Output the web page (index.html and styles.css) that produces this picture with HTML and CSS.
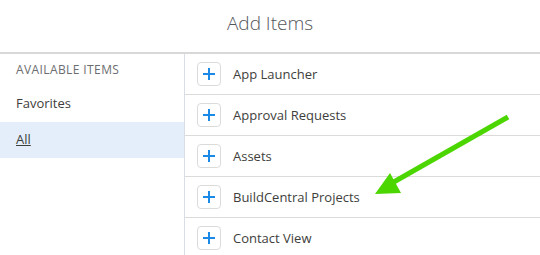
FILE: index.html
```html
<!DOCTYPE html>
<html lang="en">
<head>
    <meta charset="UTF-8">
    <title>Add Items</title>
    <link rel="stylesheet" href="styles.css">
</head>
<body>
    <div class="modal">
        <h1 class="title">Add Items</h1>
        <div class="content">
            <div class="sidebar">
                <div class="section-label">AVAILABLE ITEMS</div>
                <div class="nav-item">Favorites</div>
                <div class="nav-item active"><span>All</span></div>
            </div>
            <ul class="items">
                <li class="item"><span class="add-btn"><svg width="12" height="12" viewBox="0 0 12 12"><path d="M6 0v12M0 6h12" stroke="#1b8ae6" stroke-width="2"/></svg></span>App Launcher</li>
                <li class="item"><span class="add-btn"><svg width="12" height="12" viewBox="0 0 12 12"><path d="M6 0v12M0 6h12" stroke="#1b8ae6" stroke-width="2"/></svg></span>Approval Requests</li>
                <li class="item"><span class="add-btn"><svg width="12" height="12" viewBox="0 0 12 12"><path d="M6 0v12M0 6h12" stroke="#1b8ae6" stroke-width="2"/></svg></span>Assets</li>
                <li class="item"><span class="add-btn"><svg width="12" height="12" viewBox="0 0 12 12"><path d="M6 0v12M0 6h12" stroke="#1b8ae6" stroke-width="2"/></svg></span>BuildCentral Projects</li>
                <li class="item"><span class="add-btn"><svg width="12" height="12" viewBox="0 0 12 12"><path d="M6 0v12M0 6h12" stroke="#1b8ae6" stroke-width="2"/></svg></span>Contact View</li>
            </ul>
        </div>
        <!-- annotation arrow -->
        <svg class="arrow" width="540" height="255" viewBox="0 0 540 255">
            <line x1="508" y1="117" x2="392" y2="183" stroke="#4cd600" stroke-width="5"/>
            <polygon points="375,194 390,173 401,193" fill="#4cd600"/>
        </svg>
    </div>
</body>
</html>
```

FILE: styles.css
```css
* {
    margin: 0;
    padding: 0;
    box-sizing: border-box;
}

body {
    width: 540px;
    height: 255px;
    overflow: hidden;
    background-color: #fff;
    font-family: "Open Sans", Arial, sans-serif;
}

.modal {
    position: relative;
    width: 540px;
    height: 255px;
}

.title {
    height: 54px;
    font-size: 19px;
    font-weight: 300;
    color: #54565b;
    text-align: center;
    line-height: 46px;
    border-bottom: 2px solid #d8d8d8;
}

.content {
    display: flex;
}

.sidebar {
    width: 185px;
    border-right: 1px solid #d8dde6;
    height: 201px;
}

.section-label {
    font-size: 12px;
    letter-spacing: 0.4px;
    color: #6b6d70;
    padding: 7px 0 0 16px;
    height: 32px;
}

.nav-item {
    font-size: 13px;
    color: #3e3e3c;
    padding-left: 16px;
    height: 36px;
    line-height: 35px;
}

.nav-item.active {
    background-color: #e3eefa;
}

.nav-item.active span {
    text-decoration: underline;
}

.items {
    list-style: none;
    flex: 1;
}

.item {
    display: flex;
    align-items: center;
    height: 41px;
    border-bottom: 1px solid #dddbda;
    padding-left: 12px;
    font-size: 13px;
    color: #3e3e3c;
}

.add-btn {
    display: flex;
    align-items: center;
    justify-content: center;
    width: 24px;
    height: 24px;
    border: 1px solid #dddbda;
    border-radius: 4px;
    margin-right: 12px;
}

.arrow {
    position: absolute;
    top: 0;
    left: 0;
}
```
